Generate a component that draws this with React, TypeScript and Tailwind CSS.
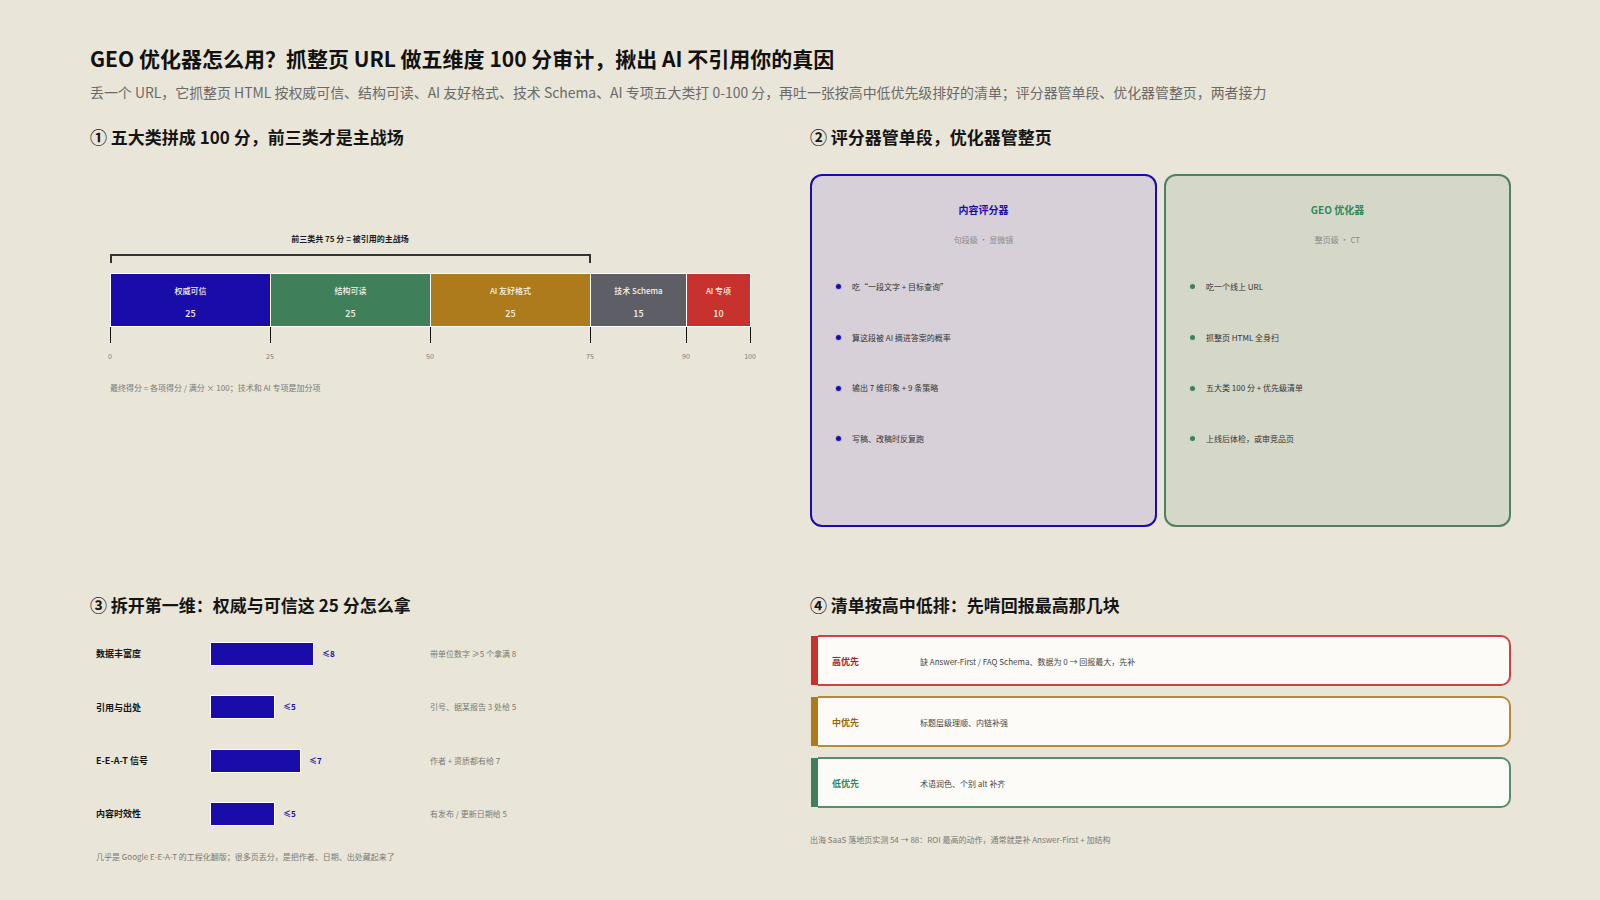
import React from 'react';

const segments = [
  { name: '权威可信', score: 25, width: 'w-[159px]', color: 'bg-[#1a0ca8]' },
  { name: '结构可读', score: 25, width: 'w-[160px]', color: 'bg-[#3f7f5a]' },
  { name: 'AI 友好格式', score: 25, width: 'w-[160px]', color: 'bg-[#ad7a1c]' },
  { name: '技术 Schema', score: 15, width: 'w-[96px]', color: 'bg-[#5e5e66]' },
  { name: 'AI 专项', score: 10, width: 'w-[64px]', color: 'bg-[#c8322e]' },
];

const ticks = [
  { label: '0', width: 'w-[160px]' },
  { label: '25', width: 'w-[160px]' },
  { label: '50', width: 'w-[160px]' },
  { label: '75', width: 'w-[96px]' },
  { label: '90', width: 'w-[64px]' },
];

const scorerItems = ['吃“一段文字 + 目标查询”', '算这段被 AI 摘进答案的概率', '输出 7 维印象 + 9 条策略', '写稿、改稿时反复跑'];
const optimizerItems = ['吃一个线上 URL', '抓整页 HTML 全身扫', '五大类 100 分 + 优先级清单', '上线后体检\uFF0C或审竞品页'];

const authority = [
  { name: '数据丰富度', width: 'w-[104px]', max: '≤8', note: '带单位数字 ≥5 个拿满 8' },
  { name: '引用与出处', width: 'w-[65px]', max: '≤5', note: '引号、据某报告 3 处给 5' },
  { name: 'E-E-A-T 信号', width: 'w-[91px]', max: '≤7', note: '作者 + 资质都有给 7' },
  { name: '内容时效性', width: 'w-[65px]', max: '≤5', note: '有发布 / 更新日期给 5' },
];

const priorities = [
  { name: '高优先', text: '缺 Answer-First / FAQ Schema、数据为 0 → 回报最大\uFF0C先补', stripe: 'bg-[#c8322e]', border: 'border-[#cc4441]', color: 'text-[#a82424]' },
  { name: '中优先', text: '标题层级理顺、内链补强', stripe: 'bg-[#ad7a1c]', border: 'border-[#b98a36]', color: 'text-[#96660f]' },
  { name: '低优先', text: '术语润色、个别 alt 补齐', stripe: 'bg-[#3f7f5a]', border: 'border-[#558f6e]', color: 'text-[#2b8a5c]' },
];

const title = 'GEO 优化器怎么用\uFF1F抓整页 URL 做五维度 100 分审计\uFF0C揪出 AI 不引用你的真因';
const subtitle = '丢一个 URL\uFF0C它抓整页 HTML 按权威可信、结构可读、AI 友好格式、技术 Schema、AI 专项五大类打 0-100 分\uFF0C再吐一张按高中低优先级排好的清单\uFF1B评分器管单段、优化器管整页\uFF0C两者接力';

function Heading({ children }: { children: React.ReactNode }) {
  return <h2 className="h-6 text-[17px] leading-6 font-bold text-[#151515]">{children}</h2>;
}

function CompareCard({ title, sub, items, box, titleColor, dot }: { title: string; sub: string; items: string[]; box: string; titleColor: string; dot: string }) {
  return (
    <div className={`h-[353px] flex-1 rounded-[12px] border-2 pt-[27px] ${box}`}>
      <div className={`text-center text-[10px] leading-[14px] font-bold ${titleColor}`}>{title}</div>
      <div className="mt-4 text-center text-[8px] leading-[14px] text-[#8a8a8a]">{sub}</div>
      <ul className="mt-[15.2px]">
        {items.map((item) => (
          <li key={item} className="flex h-[50.6px] items-center gap-[10.5px] pl-[22.5px] text-[8px] text-[#333333]">
            <span className={`h-[7px] w-[7px] rounded-full border border-white/70 ${dot}`} />
            {item}
          </li>
        ))}
      </ul>
    </div>
  );
}

export default function App() {
  return (
    <div className="h-[900px] w-[1600px] overflow-hidden bg-[#e9e5d8] pt-[43px] pl-[90px] font-['Noto_Sans_CJK_SC','Noto_Sans',sans-serif]">
      <h1 className="h-[30px] text-[21px] leading-[30px] font-bold text-[#111111]">{title}</h1>
      <p className="mt-[7px] h-6 text-[13.93px] leading-6 text-[#6a6a6a]">{subtitle}</p>

      <div className="mt-[20.5px] grid grid-cols-[700px_701px] grid-rows-[468px_auto] gap-x-5">
        {/* 五大类 */}
        <section>
          <Heading>{'① 五大类拼成 100 分\uFF0C前三类才是主战场'}</Heading>
          <div className="pl-5">
            <div className="mt-[83px] h-[14px] w-[480px] text-center text-[8px] leading-[14px] font-bold text-[#1c1c1c]">
              前三类共 75 分 = 被引用的主战场
            </div>
            <div className="mt-2 h-[9px] w-[481px] border-x-2 border-t-2 border-[#333333]" />
            <div className="mt-[10px] flex h-[54px] w-[641px] border border-white">
              {segments.map((s, i) => (
                <div
                  key={s.name}
                  className={`flex flex-col items-center justify-center gap-[10px] pt-[4px] text-[8px] leading-[13px] font-medium text-[#f5f2ea] ${s.color} ${s.width} ${i > 0 ? 'border-l border-white' : ''}`}
                >
                  <span>{s.name}</span>
                  <span className="text-[9px]">{s.score}</span>
                </div>
              ))}
            </div>
            <div className="flex h-[16px] w-[641px] border-r border-[#111111]">
              {ticks.map((t) => (
                <div key={t.label} className={`relative h-full border-l border-[#111111] ${t.width}`}>
                  <span className="absolute top-[24px] left-[-1px] -translate-x-1/2 text-[7px] leading-[10px] text-[#7a7a7a]">{t.label}</span>
                  {t.label === '90' && (
                    <span className="absolute top-[24px] left-[63px] -translate-x-1/2 text-[7px] leading-[10px] text-[#7a7a7a]">100</span>
                  )}
                </div>
              ))}
            </div>
            <p className="mt-[38px] text-[8px] leading-[14px] text-[#7a7a72]">{'最终得分 = 各项得分 / 满分 × 100\uFF1B技术和 AI 专项是加分项'}</p>
          </div>
        </section>

        {/* 评分器 vs 优化器 */}
        <section>
          <Heading>{'② 评分器管单段\uFF0C优化器管整页'}</Heading>
          <div className="mt-[25px] flex gap-[7px]">
            <CompareCard
              title="内容评分器"
              sub="句段级 · 显微镜"
              items={scorerItems}
              box="border-[#1a0ca8] bg-[#d8d0d8]"
              titleColor="text-[#1a0ca8]"
              dot="bg-[#1a0ca8]"
            />
            <CompareCard
              title="GEO 优化器"
              sub="整页级 · CT"
              items={optimizerItems}
              box="border-[#4f8062] bg-[#d5d7c9]"
              titleColor="text-[#2b8a5c]"
              dot="bg-[#3f7f5a]"
            />
          </div>
        </section>

        {/* 权威与可信 */}
        <section>
          <Heading>{'③ 拆开第一维\uFF1A权威与可信这 25 分怎么拿'}</Heading>
          <div className="mt-[11px]">
            {authority.map((row) => (
              <div key={row.name} className="flex h-[53.3px] items-center pl-[6px]">
                <div className="w-[114px] text-[9px] font-bold text-[#151515]">{row.name}</div>
                <div className="flex w-[220px] items-center gap-2">
                  <div className={`h-[24px] border border-white bg-[#1a0ca8] ${row.width}`} />
                  <span className="text-[8px] font-bold text-[#1a0ca8]">{row.max}</span>
                </div>
                <div className="text-[8px] text-[#7a7a72]">{row.note}</div>
              </div>
            ))}
          </div>
          <p className="mt-[9px] pl-[6px] text-[8px] leading-[14px] text-[#7a7a72]">{'几乎是 Google E-E-A-T 的工程化翻版\uFF1B很多页丢分\uFF0C是把作者、日期、出处藏起来了'}</p>
        </section>

        {/* 优先级清单 */}
        <section>
          <Heading>{'④ 清单按高中低排\uFF1A先啃回报最高那几块'}</Heading>
          <div className="mt-[18px] flex flex-col gap-[10px]">
            {priorities.map((p) => (
              <div key={p.name} className="flex h-[51px]">
                <div className={`my-[1px] ml-[1px] w-[7px] ${p.stripe}`} />
                <div className={`flex flex-1 items-center rounded-r-[10px] border-y-2 border-r-2 bg-[#fdfbf7] pt-[3px] pl-[14px] ${p.border}`}>
                  <span className={`w-[88px] text-[9px] font-bold ${p.color}`}>{p.name}</span>
                  <span className="text-[8px] text-[#444444]">{p.text}</span>
                </div>
              </div>
            ))}
          </div>
          <p className="mt-[25px] text-[8px] leading-[14px] text-[#7a7a72]">{'出海 SaaS 落地页实测 54 → 88\uFF1AROI 最高的动作\uFF0C通常就是补 Answer-First + 加结构'}</p>
        </section>
      </div>
    </div>
  );
}
